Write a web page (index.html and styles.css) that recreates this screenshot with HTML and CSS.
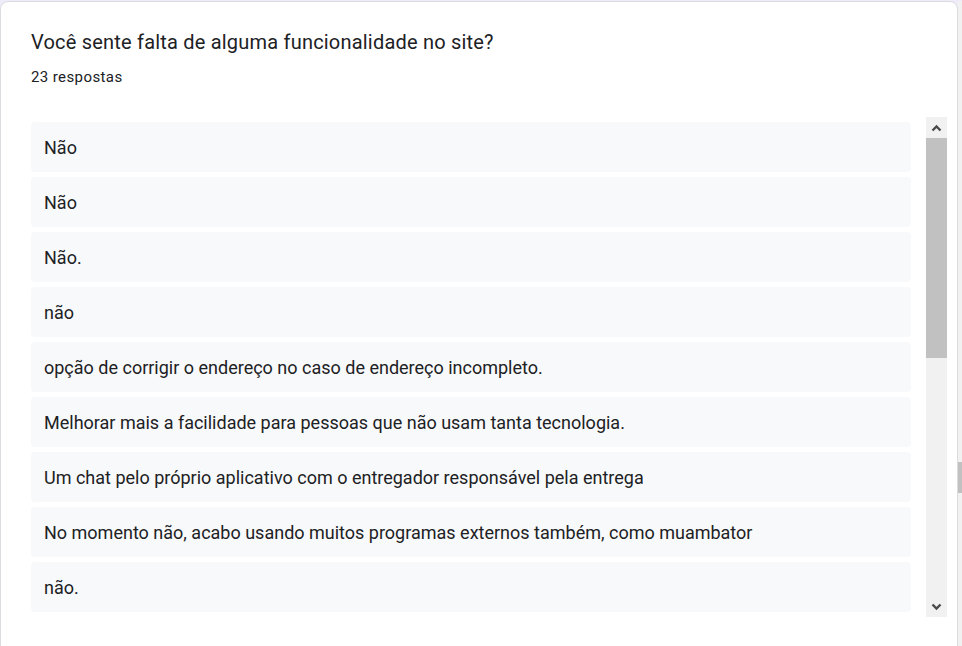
FILE: index.html
```html
<!DOCTYPE html>
<html lang="pt-BR">
<head>
<meta charset="utf-8">
<title>Respostas</title>
<link rel="stylesheet" href="styles.css">
</head>
<body>
<div class="page">
  <section class="card">
    <h1 class="title">Você sente falta de alguma funcionalidade no site?</h1>
    <div class="count">23 respostas</div>
    <div class="scroll-area">
      <ul class="list">
        <li class="item">Não</li>
        <li class="item">Não</li>
        <li class="item">Não.</li>
        <li class="item">não</li>
        <li class="item">opção de corrigir o endereço no caso de endereço incompleto.</li>
        <li class="item">Melhorar mais a facilidade para pessoas que não usam tanta tecnologia.</li>
        <li class="item">Um chat pelo próprio aplicativo com o entregador responsável pela entrega</li>
        <li class="item">No momento não, acabo usando muitos programas externos também, como muambator</li>
        <li class="item">não.</li>
      </ul>
      <div class="scrollbar">
        <div class="sb-btn">
          <svg width="11" height="8" viewBox="0 0 11 8"><path d="M1.5 6.5 L5.5 2.5 L9.5 6.5" fill="none" stroke="#4a4a4a" stroke-width="2.4"/></svg>
        </div>
        <div class="sb-track">
          <div class="sb-thumb"></div>
        </div>
        <div class="sb-btn">
          <svg width="11" height="8" viewBox="0 0 11 8"><path d="M1.5 1.5 L5.5 5.5 L9.5 1.5" fill="none" stroke="#4a4a4a" stroke-width="2.4"/></svg>
        </div>
      </div>
    </div>
  </section>
  <div class="page-scroll">
    <div class="page-scroll-thumb"></div>
  </div>
</div>
</body>
</html>
```

FILE: styles.css
```css
html, body {
  margin: 0;
  padding: 0;
  height: 100%;
  overflow: hidden;
}
body {
  background: #f0ebf8;
  font-family: Roboto, "Liberation Sans", Arial, sans-serif;
  color: #202124;
}
.page {
  display: flex;
  height: 646px;
  padding-top: 1px;
  box-sizing: border-box;
}
.card {
  width: 958px;
  box-sizing: border-box;
  background: #fff;
  border: 1px solid #dadce0;
  border-radius: 8px;
  padding: 26px 0 0 30px;
  height: 660px;
  flex: none;
}
.title {
  margin: 0;
  font-size: 20px;
  font-weight: 400;
  line-height: 28px;
  letter-spacing: 0.2px;
  color: #202124;
}
.count {
  margin-top: 11px;
  font-size: 15px;
  line-height: 20px;
  letter-spacing: 0.4px;
  color: #202124;
}
.scroll-area {
  display: flex;
  margin-top: 30px;
  height: 500px;
  width: 916px;
}
.list {
  list-style: none;
  margin: 0;
  padding: 5px 15px 0 0;
  flex: 1;
  overflow: hidden;
  display: flex;
  flex-direction: column;
  gap: 5px;
}
.item {
  flex: none;
  background: #f8f9fa;
  border-radius: 4px;
  height: 50px;
  box-sizing: border-box;
  padding: 0 13px;
  display: flex;
  align-items: center;
  font-size: 18px;
  letter-spacing: 0;
  color: #202124;
}
.scrollbar {
  width: 21px;
  flex: none;
  display: flex;
  flex-direction: column;
  background: #f1f1f1;
}
.sb-btn {
  height: 21px;
  display: flex;
  align-items: center;
  justify-content: center;
  flex: none;
}
.sb-track {
  flex: 1;
  display: flex;
  flex-direction: column;
}
.sb-thumb {
  height: 220px;
  background: #c1c1c1;
}
.page-scroll {
  flex: 1;
  background: #f1f1f1;
  display: flex;
  flex-direction: column;
  padding-top: 461px;
}
.page-scroll-thumb {
  height: 31px;
  background: #c1c1c1;
}
```
